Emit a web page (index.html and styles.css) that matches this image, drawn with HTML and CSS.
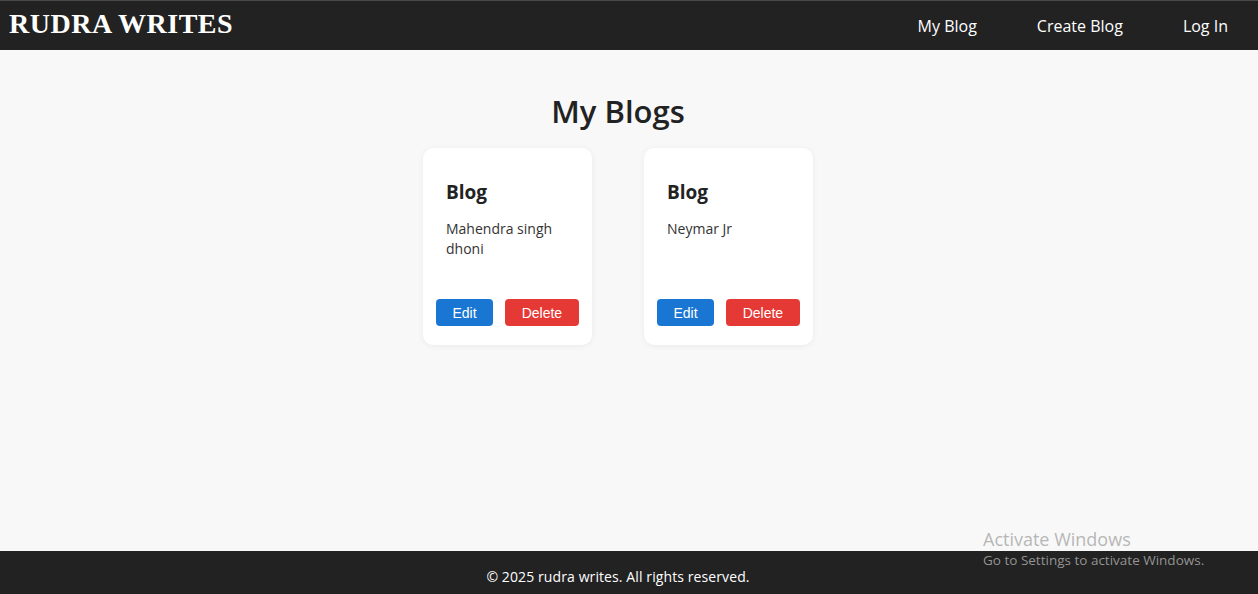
FILE: index.html
```html
<!DOCTYPE html>
<html lang="en">
<head>
<meta charset="utf-8">
<title>Rudra Writes</title>
<link rel="stylesheet" href="styles.css">
</head>
<body>
<header class="topbar">
  <div class="logo">RUDRA WRITES</div>
  <nav class="nav">
    <a href="#">My Blog</a>
    <a href="#">Create Blog</a>
    <a href="#">Log In</a>
  </nav>
</header>
<main class="main">
  <h1 class="page-title">My Blogs</h1>
  <div class="cards">
    <div class="card">
      <div class="card-body">
        <h3 class="card-title">Blog</h3>
        <p class="card-text">Mahendra singh dhoni</p>
      </div>
      <div class="card-actions">
        <button class="btn btn-edit">Edit</button>
        <button class="btn btn-delete">Delete</button>
      </div>
    </div>
    <div class="card">
      <div class="card-body">
        <h3 class="card-title">Blog</h3>
        <p class="card-text">Neymar Jr</p>
      </div>
      <div class="card-actions">
        <button class="btn btn-edit">Edit</button>
        <button class="btn btn-delete">Delete</button>
      </div>
    </div>
  </div>
</main>
<footer class="footer">© 2025 rudra writes. All rights reserved.</footer>
<div class="watermark">
  <div class="wm-title">Activate Windows</div>
  <div class="wm-sub">Go to Settings to activate Windows.</div>
</div>
</body>
</html>
```
FILE: styles.css
```css
* { box-sizing: border-box; }
html, body { margin: 0; padding: 0; }
body {
  min-height: 100vh;
  display: flex;
  flex-direction: column;
  background: #f8f8f8;
  font-family: "Open Sans", "Noto Sans", sans-serif;
  color: #222;
}
.topbar {
  height: 50px;
  border-top: 1px solid #4a4a4a;
  background: #222;
  display: flex;
  align-items: center;
  justify-content: space-between;
  padding: 0 30px 0 9px;
}
.logo {
  font-family: "Liberation Serif", serif;
  font-weight: bold;
  font-size: 28px;
  letter-spacing: 0.5px;
  color: #fff;
  margin-top: -4px;
}
.nav { display: flex; gap: 60px; }
.nav a {
  color: #fff;
  text-decoration: none;
  font-size: 16px;
}
.main {
  flex: 1;
  padding: 0 22px 0 0;
  display: flex;
  flex-direction: column;
  align-items: center;
}
.page-title {
  margin: 43px 0 18px;
  font-size: 31px;
  font-weight: 600;
  line-height: 37px;
  color: #222;
}
.cards { display: flex; gap: 52px; }
.card {
  width: 169px;
  height: 197px;
  background: #fff;
  border-radius: 10px;
  box-shadow: 0 1px 6px rgba(0,0,0,0.06);
  padding: 29px 13px 19px;
  display: flex;
  flex-direction: column;
}
.card-body { padding: 0 10px; flex: 1; }
.card-title {
  margin: 0;
  font-size: 19px;
  font-weight: 700;
  line-height: 30px;
  color: #222;
}
.card-text {
  margin: 12px 0 0;
  font-size: 14px;
  line-height: 20px;
  color: #333;
}
.card-actions { display: flex; gap: 12px; }
.btn {
  height: 27px;
  border: none;
  border-radius: 4px;
  padding: 0 16.5px;
  font-family: "Liberation Sans", Arial, sans-serif;
  font-size: 14px;
  color: #fff;
}
.btn-edit { background: #1976d2; }
.btn-delete { background: #e53935; }
.footer {
  height: 43px;
  background: #222;
  color: #fff;
  font-size: 14px;
  display: flex;
  align-items: center;
  justify-content: center;
  padding: 8px 22px 0 0;
  letter-spacing: 0.1px;
}
.watermark {
  position: absolute;
  left: 983px;
  top: 527px;
  color: rgba(170,170,170,0.85);
}
.wm-title { font-size: 18px; line-height: 24px; }
.wm-sub { font-size: 13.5px; line-height: 18px; }
```
